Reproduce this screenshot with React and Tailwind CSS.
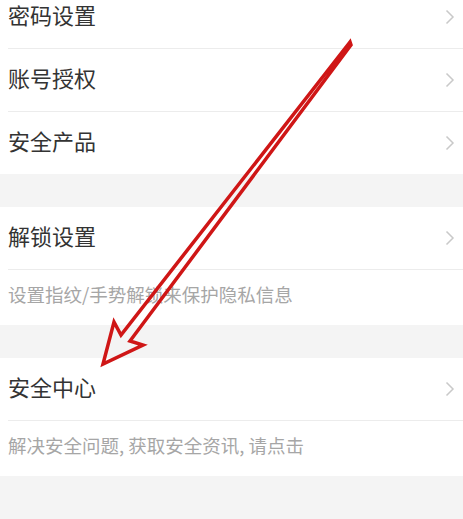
import React from "react";

const Chevron = () => (
  <svg width="10" height="16" viewBox="0 0 10 16" className="shrink-0">
    <path d="M1.5 1.5 L8 8 L1.5 14.5" fill="none" stroke="#c9c9c9" strokeWidth="1.5" />
  </svg>
);

const Row = ({ title, divider = true }) => (
  <div className="bg-white">
    <div className="flex h-[62px] items-center justify-between pl-2 pr-[8px]">
      <span className="-translate-y-[3px] text-[22px] text-[#333333]">{title}</span>
      <Chevron />
    </div>
    {divider && <div className="ml-2 h-px bg-[#ececec]" />}
  </div>
);

const Sub = ({ text }) => (
  <div className="flex h-[55px] items-center bg-white pl-2">
    <span className="-translate-y-[3px] text-[18.5px] text-[#a6a6a6]">{text}</span>
  </div>
);

export default function App() {
  return (
    <div
      className="relative h-[519px] w-[463px] overflow-hidden bg-[#f4f4f4]"
      style={{ fontFamily: '"Noto Sans CJK SC", "Noto Sans", sans-serif' }}
    >
      <div className="-mt-[14px]">
        <Row title="密码设置" />
        <Row title="账号授权" />
        <Row title="安全产品" divider={false} />
        <div className="h-[33px]" />
        <Row title="解锁设置" />
        <Sub text="设置指纹/手势解锁来保护隐私信息" />
        <div className="h-[33px]" />
        <Row title="安全中心" />
        <Sub text="解决安全问题, 获取安全资讯, 请点击" />
      </div>
      <svg
        className="pointer-events-none absolute left-0 top-0"
        width="463"
        height="519"
        viewBox="0 0 463 519"
      >
        <polygon
          points="350,42 121,335 114,322 103,364 143,345 130,341 351,45"
          fill="none"
          stroke="#cf1616"
          strokeWidth="3.5"
          strokeLinejoin="miter"
        />
      </svg>
    </div>
  );
}
